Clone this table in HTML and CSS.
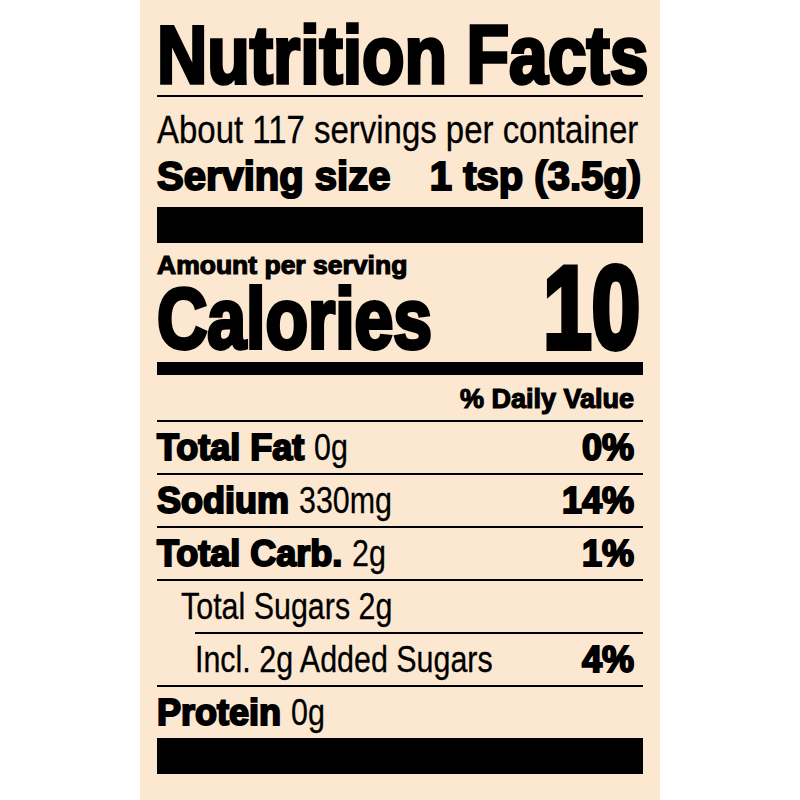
FILE: index.html
```html
<!DOCTYPE html>
<html lang="en">
<head>
<meta charset="utf-8">
<title>Nutrition Facts</title>
<link rel="stylesheet" href="styles.css">
</head>
<body>
<div class="page">
  <h1 class="title"><span class="squeeze">Nutrition Facts</span></h1>
  <div class="rule"></div>
  <p class="servings"><span class="reg">About 117 servings per container</span></p>
  <div class="serving-size"><span>Serving size</span><span>1 tsp (3.5g)</span></div>
  <div class="bar bar-thick bar-top"></div>
  <div class="cal-row">
    <div class="cal-left">
      <div class="amount">Amount per serving</div>
      <div class="cal-label"><span class="squeeze-cal">Calories</span></div>
    </div>
    <div class="cal-value"><span class="squeeze-num">10</span></div>
  </div>
  <div class="bar bar-mid"></div>
  <div class="dv-head">% Daily Value</div>
  <div class="row"><span class="name"><b>Total Fat</b> <span class="reg">0g</span></span><b class="pct">0%</b></div>
  <div class="row"><span class="name"><b>Sodium</b> <span class="reg">330mg</span></span><b class="pct">14%</b></div>
  <div class="row"><span class="name"><b>Total Carb.</b> <span class="reg">2g</span></span><b class="pct">1%</b></div>
  <div class="row row-sub"><span class="name"><span class="reg">Total Sugars 2g</span></span></div>
  <div class="row row-subsub"><span class="name"><span class="reg">Incl. 2g Added Sugars</span></span><b class="pct">4%</b></div>
  <div class="row"><span class="name"><b>Protein</b> <span class="reg">0g</span></span></div>
  <div class="bar bar-thick"></div>
</div>
</body>
</html>
```

FILE: styles.css
```css
html, body {
  margin: 0;
  padding: 0;
  background: #ffffff;
}

body {
  font-family: "Liberation Sans", Arial, sans-serif;
  color: #000;
}

.page {
  width: 520px;
  height: 800px;
  margin: 0 auto;
  padding: 0 17px;
  box-sizing: border-box;
  background: #fce8d0;
  overflow: hidden;
}

.title {
  margin: 0;
  padding-top: 15px;
  font-size: 81px;
  line-height: 80px;
  font-weight: 700;
  white-space: nowrap;
}

.squeeze {
  display: inline-block;
  transform: scaleX(0.86);
  transform-origin: left center;
  -webkit-text-stroke: 3.5px #000;
}

.rule {
  height: 2px;
  background: #000;
}

.servings {
  margin: 9px 0 0;
  font-size: 39px;
  line-height: 48px;
  font-weight: 400;
  white-space: nowrap;
}

.reg {
  display: inline-block;
  font-weight: 400;
  transform: scaleX(0.845);
  transform-origin: left center;
  white-space: nowrap;
  -webkit-text-stroke: 0.3px #000;
}

.serving-size {
  display: flex;
  justify-content: space-between;
  padding-right: 2px;
  font-size: 40px;
  line-height: 44px;
  font-weight: 700;
  white-space: nowrap;
  -webkit-text-stroke: 2px #000;
}

.bar {
  background: #000;
}

.bar-thick {
  height: 36px;
}

.bar-top {
  margin-top: 9px;
}

.bar-mid {
  height: 13px;
  margin-top: 5px;
}

.cal-row {
  display: flex;
  justify-content: space-between;
  align-items: flex-end;
  margin-top: 7px;
  font-weight: 700;
  white-space: nowrap;
}

.amount {
  font-size: 26.5px;
  line-height: 30px;
  -webkit-text-stroke: 1.2px #000;
}

.cal-label {
  font-size: 85px;
  line-height: 77px;
}

.squeeze-cal {
  display: inline-block;
  transform: scaleX(0.82);
  transform-origin: left center;
  -webkit-text-stroke: 4px #000;
}

.cal-value {
  font-size: 116px;
  line-height: 98px;
  padding-right: 3px;
}

.squeeze-num {
  display: inline-block;
  transform: scaleX(0.75);
  transform-origin: right center;
  -webkit-text-stroke: 6px #000;
}

.dv-head {
  margin-top: 9px;
  padding-right: 9px;
  text-align: right;
  font-size: 27px;
  line-height: 30px;
  font-weight: 700;
  -webkit-text-stroke: 1.2px #000;
}

.row {
  display: flex;
  justify-content: space-between;
  border-top: 2px solid #000;
  padding-right: 9px;
  font-size: 36px;
  line-height: 51px;
  white-space: nowrap;
}

.dv-head + .row {
  margin-top: 6px;
}

.row b {
  font-weight: 700;
  -webkit-text-stroke: 2px #000;
}

.row-sub .name {
  padding-left: 24px;
}

.row-subsub {
  margin-left: 38px;
}
```
